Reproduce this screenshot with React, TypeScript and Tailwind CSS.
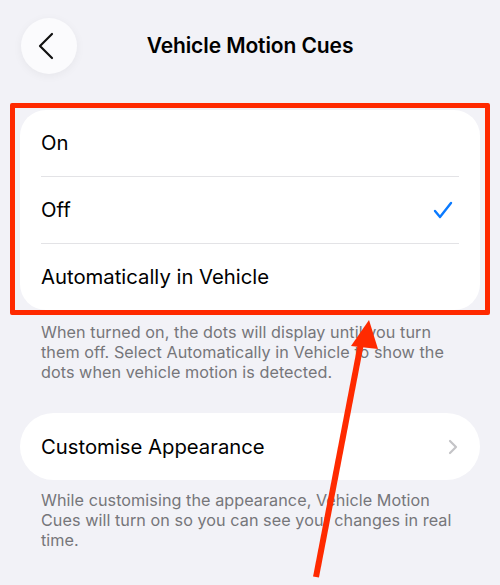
export default function App() {
  const rows = ["On", "Off", "Automatically in Vehicle"];

  return (
    <div className="relative w-[500px] h-[585px] overflow-hidden bg-[#f2f2f7] font-['Inter','Noto_Sans',sans-serif] text-black">
      {/* header */}
      <div className="grid grid-cols-[56px_1fr_56px] items-center px-[21px] pt-[18px]">
        <button className="w-[56px] h-[56px] rounded-full bg-[#fbfbfd] shadow-[0_2px_10px_rgba(0,0,0,0.05)] flex items-center justify-center">
          <svg width="56" height="56" viewBox="0 0 56 56" fill="none">
            <path d="M31 16 L19 28 L31 40" stroke="#111" strokeWidth="2.2" strokeLinecap="round" strokeLinejoin="round" />
          </svg>
        </button>
        <h1 className="text-center text-[21px] leading-[28px] font-semibold tracking-[-0.1px]">Vehicle Motion Cues</h1>
        <div />
      </div>

      {/* options */}
      <div className="mx-[20px] mt-[36px] rounded-[26px] bg-white">
        {rows.map((label, i) => (
          <div key={label}>
            {i > 0 && <div className="mx-[21px] h-px bg-[#e3e3e6]" />}
            <div className="h-[66px] flex items-center justify-between pl-[21px] pr-[27px]">
              <span className="text-[20.3px] leading-[26px]">{label}</span>
              {label === "Off" && (
                <svg width="20" height="18" viewBox="0 0 20 18" fill="none">
                  <path d="M2 10 L7 16 L18 2" stroke="#0a7aff" strokeWidth="2.4" strokeLinecap="round" strokeLinejoin="round" />
                </svg>
              )}
            </div>
          </div>
        ))}
      </div>
      <p className="mt-[12px] px-[41px] text-[16.2px] leading-[20px] tracking-[0.05px] text-[#76767a]">
        When turned on, the dots will display until you turn them off. Select Automatically in Vehicle to show the dots when vehicle motion is detected.
      </p>

      {/* customise */}
      <div className="mx-[20px] mt-[31px] h-[67px] rounded-full bg-white flex items-center justify-between pl-[21px] pr-[22px]">
        <span className="text-[20.3px] leading-[26px]">Customise Appearance</span>
        <svg width="10" height="16" viewBox="0 0 10 16" fill="none">
          <path d="M2 2 L8 8 L2 14" stroke="#c4c4c7" strokeWidth="2.2" strokeLinecap="round" strokeLinejoin="round" />
        </svg>
      </div>
      <p className="mt-[10px] px-[41px] text-[16.2px] leading-[20px] tracking-[0.05px] text-[#76767a]">
        While customising the appearance, Vehicle Motion Cues will turn on so you can see your changes in real time.
      </p>

      {/* annotation overlay */}
      <div className="absolute left-[10px] top-[103px] w-[480px] h-[212px] border-[5px] border-[#ff2a00] rounded-[2px]" />
      <svg className="absolute left-0 top-0" width="500" height="585" viewBox="0 0 500 585">
        <line x1="316" y1="577" x2="362" y2="338" stroke="#ff2a00" strokeWidth="6" />
        <polygon points="369,320 351,346 378,349" fill="#ff2a00" />
      </svg>
    </div>
  );
}
